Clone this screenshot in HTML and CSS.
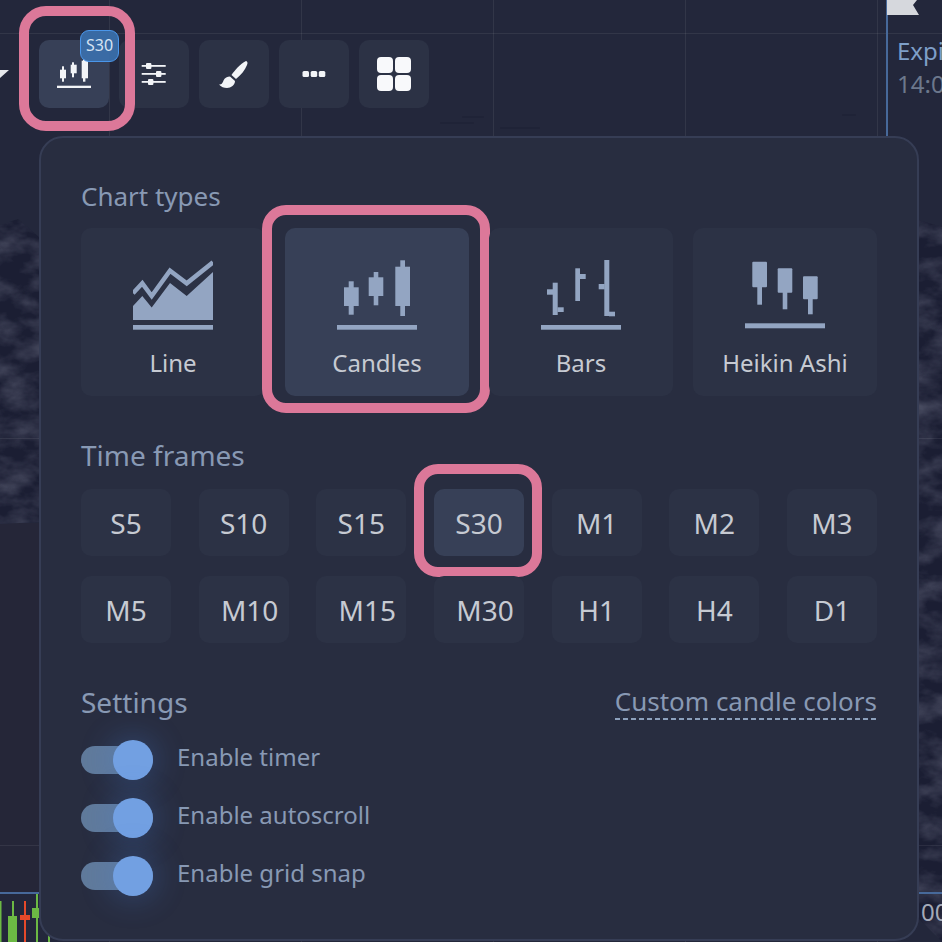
FILE: index.html
```html
<!DOCTYPE html>
<html lang="en">
<head>
    <meta charset="UTF-8">
    <meta name="viewport" content="width=device-width, initial-scale=1.0">
    <title>Chart settings</title>
    <link rel="stylesheet" href="styles.css">
</head>
<body>
    <!-- chart behind the panel -->
    <div class="chart">
        <svg class="chart-art" width="942" height="942" viewBox="0 0 942 942">
            <defs>
                <filter id="grain" x="0" y="0" width="100%" height="100%">
                    <feTurbulence type="fractalNoise" baseFrequency="0.03 0.05" numOctaves="4" seed="7"/>
                    <feColorMatrix type="matrix" values="0 0 0 0 0.145  0 0 0 0 0.155  0 0 0 0 0.225  1 0 0 0 -0.36" result="noise"/>
                    <feComposite in="noise" in2="SourceGraphic" operator="in"/>
                </filter>
            </defs>
            <rect width="942" height="942" fill="#23273b"/>
            <rect y="523" width="40" height="370" fill="#252638"/>
            <path d="M0 225 L18 219 L40 238 L300 200 L600 180 L900 215 L942 227 L942 942 L700 700 L40 522 L0 524 Z" fill="#1b1e33"/>
            <path d="M0 225 L18 219 L40 238 L300 200 L600 180 L900 215 L942 227 L942 942 L700 700 L40 522 L0 524 Z" filter="url(#grain)"/>
            <g class="specks">
                <rect x="440" y="122" width="34" height="2" rx="1"/>
                <rect x="462" y="116" width="22" height="2" rx="1"/>
                <rect x="500" y="127" width="40" height="2" rx="1"/>
                <rect x="842" y="114" width="14" height="2" rx="1"/>
            </g>
            <g class="grid-lines">
                <rect x="109" width="1" height="942"/>
                <rect x="301" width="1" height="942"/>
                <rect x="493" width="1" height="942"/>
                <rect x="685" width="1" height="942"/>
                <rect x="877" width="1" height="942"/>
                <rect y="33" width="942" height="1"/>
                <rect y="438" width="942" height="1"/>
                <rect y="845" width="942" height="1"/>
            </g>
            <rect y="892" width="942" height="2" fill="#47699a"/>
            <rect x="886" width="2" height="140" fill="#47699a"/>
            <polygon points="887,0 917,0 913,5 919,15 887,15" fill="#d6d8dd"/>
            <g fill="#6cb944">
                <rect x="0" y="901" width="1.5" height="41"/>
                <rect x="12" y="901" width="2" height="15"/>
                <rect x="8" y="916" width="9" height="26"/>
                <rect x="36" y="894" width="2" height="48"/>
                <rect x="32" y="908" width="8" height="10"/>
                <rect x="48" y="930" width="2" height="12"/>
            </g>
            <g fill="#e5492a">
                <rect x="24" y="901" width="2" height="41"/>
                <rect x="20" y="915" width="10" height="5"/>
            </g>
        </svg>
        <div class="expiry">
            <span class="expiry-label">Expiration</span>
            <span class="expiry-time">14:00:00</span>
        </div>
        <span class="axis-time">00:00</span>
    </div>

    <div class="toolbar">
        <svg class="caret" width="9" height="9" viewBox="0 0 9 9"><polygon points="0,0 9,0 0,8" fill="#e6e8ec"/></svg>
        <button class="tool-button active">
            <svg width="34" height="30" viewBox="0 0 34 30" fill="#f2f4f7">
                <rect x="5" y="7.3" width="2" height="15.4"/><rect x="3" y="10.7" width="6" height="8.6"/>
                <rect x="15" y="3.3" width="2" height="15"/><rect x="13.7" y="5.7" width="6" height="8.6" />
                <rect x="26" y="0" width="2.4" height="22.7"/><rect x="24.7" y="1.7" width="6.3" height="17.6"/>
                <rect y="26.7" width="34" height="2.3"/>
            </svg>
            <span class="badge">S30</span>
            <span class="mark"></span>
        </button>
        <button class="tool-button">
            <svg width="26" height="24" viewBox="0 0 26 24" fill="#f2f4f7">
                <rect x="0.7" y="3" width="24" height="1.8"/><rect x="0.7" y="11" width="24" height="1.8"/><rect x="0.7" y="19" width="24" height="1.8"/>
                <rect x="5" y="1" width="5.4" height="6" rx="1"/><rect x="15" y="9" width="5.4" height="6" rx="1"/><rect x="7" y="17" width="5.4" height="6" rx="1"/>
            </svg>
        </button>
        <button class="tool-button">
            <svg width="30" height="28" viewBox="0 0 30 28" fill="#f2f4f7">
                <path d="M27 1 C28.5 1.5 29 3 28 5 C26 10 22 15 17 19 L12.5 15 C16 10 21 4 27 1 Z"/>
                <path d="M11 16.5 L16 21 C16 25 12 28 8 28 C5 28 2 27 0 24.5 C3 24.5 3.5 23 4.5 20.5 C5.5 18 8.5 16.5 11 16.5 Z"/>
            </svg>
        </button>
        <button class="tool-button">
            <svg width="24" height="6" viewBox="0 0 24 6" fill="#f2f4f7">
                <rect x="0.5" width="6.5" height="6" rx="1.5"/><rect x="8.7" width="6.5" height="6" rx="1.5"/><rect x="16.8" width="6.5" height="6" rx="1.5"/>
            </svg>
        </button>
        <button class="tool-button">
            <svg width="34" height="34" viewBox="0 0 34 34" fill="#f8f9fb">
                <rect width="16" height="16" rx="4"/><rect x="18" width="16" height="16" rx="4"/>
                <rect y="18" width="16" height="16" rx="4"/><rect x="18" y="18" width="16" height="16" rx="4"/>
            </svg>
        </button>
    </div>

    <div class="panel">
        <div class="section-title small-title">Chart types</div>
        <div class="chart-types">
            <button class="type-card">
                <svg width="80" height="70" viewBox="0 0 80 70" fill="#93a5c2">
                    <polyline points="0,33.3 9.3,23.3 18.7,36 37,10.7 53.7,23.3 80,2.3" fill="none" stroke="#93a5c2" stroke-width="4.5"/>
                    <polygon points="0,46 9.3,36 18.7,47.5 37,23 53.7,36 80,12 80,60 0,60"/>
                    <rect y="65" width="80" height="4.7"/>
                </svg>
                <span>Line</span>
            </button>
            <button class="type-card active">
                <svg width="80" height="70" viewBox="0 0 80 70" fill="#93a5c2">
                    <rect x="11.7" y="21.3" width="5" height="33.4"/><rect x="7" y="27.3" width="14.7" height="18.7"/>
                    <rect x="36.7" y="12" width="4.6" height="33.3"/><rect x="31.7" y="17.3" width="14.6" height="18.7"/>
                    <rect x="63.3" y="0.3" width="4.7" height="55.7"/><rect x="58.3" y="6.7" width="14.7" height="39.3"/>
                    <rect y="65" width="80" height="4.7"/>
                </svg>
                <span>Candles</span>
                <span class="mark"></span>
            </button>
            <button class="type-card">
                <svg width="80" height="70" viewBox="0 0 80 70" fill="#93a5c2">
                    <rect x="11.7" y="22.7" width="5" height="32.3"/><rect x="6" y="29.3" width="6" height="5.4"/><rect x="16.5" y="47.3" width="6.2" height="4.7"/>
                    <rect x="34.3" y="8.3" width="4.7" height="32.7"/><rect x="39" y="14" width="5.7" height="5"/>
                    <rect x="63.3" y="0" width="5" height="56"/><rect x="57.7" y="24" width="6" height="5.3"/><rect x="68" y="51.7" width="6" height="4.6"/>
                    <rect y="65" width="80" height="4.7"/>
                </svg>
                <span>Bars</span>
            </button>
            <button class="type-card">
                <svg width="80" height="70" viewBox="0 0 80 70" fill="#93a5c2">
                    <rect x="12.3" y="20" width="4.7" height="24.7"/><rect x="7.3" y="1.7" width="14.7" height="25.6" rx="1"/>
                    <rect x="37.7" y="25" width="4.6" height="24.3"/><rect x="32.7" y="8.3" width="14.6" height="24.4" rx="1"/>
                    <rect x="63" y="30" width="4.7" height="24.3"/><rect x="58" y="16.3" width="14.7" height="23" rx="1"/>
                    <rect y="63.3" width="80" height="5"/>
                </svg>
                <span>Heikin Ashi</span>
            </button>
        </div>

        <div class="section-title frames-title">Time frames</div>
        <div class="time-frames">
            <button class="frame-button">S5</button>
            <button class="frame-button">S10</button>
            <button class="frame-button">S15</button>
            <button class="frame-button active">S30<span class="mark"></span></button>
            <button class="frame-button">M1</button>
            <button class="frame-button">M2</button>
            <button class="frame-button">M3</button>
            <button class="frame-button">M5</button>
            <button class="frame-button shifted">M10</button>
            <button class="frame-button shifted">M15</button>
            <button class="frame-button shifted">M30</button>
            <button class="frame-button">H1</button>
            <button class="frame-button">H4</button>
            <button class="frame-button">D1</button>
        </div>

        <div class="settings-head">
            <div class="section-title">Settings</div>
            <a class="custom-link">Custom candle colors</a>
        </div>
        <div class="settings-list">
            <div class="toggle-row"><span class="toggle"><span class="knob"></span></span><span class="toggle-label">Enable timer</span></div>
            <div class="toggle-row"><span class="toggle"><span class="knob"></span></span><span class="toggle-label">Enable autoscroll</span></div>
            <div class="toggle-row"><span class="toggle"><span class="knob"></span></span><span class="toggle-label">Enable grid snap</span></div>
        </div>
    </div>
</body>
</html>
```

FILE: styles.css
```css
:root {
    --page-bg: #23273b;
    --panel-bg: #282d40;
    --panel-border: #363d55;
    --card-bg: #2c3245;
    --card-active: #374057;
    --pink: #dc7899;
    --muted: #8899b4;
    --label: #c6cad2;
}

* {
    box-sizing: border-box;
}

body, html {
    margin: 0;
    padding: 0;
    width: 942px;
    height: 942px;
    overflow: hidden;
    background-color: var(--page-bg);
    font-family: 'Noto Sans', sans-serif;
}

body {
    position: relative;
}

button {
    font-family: inherit;
    border: none;
    padding: 0;
    cursor: pointer;
}

.chart {
    position: absolute;
    top: 0;
    left: 0;
    width: 942px;
    height: 942px;
    overflow: hidden;
}

.chart-art {
    display: block;
}

.grid-lines {
    fill: rgba(255, 255, 255, 0.07);
}

.specks {
    fill: rgba(20, 22, 40, 0.22);
}

.expiry {
    position: absolute;
    top: 34px;
    left: 897px;
    display: flex;
    flex-direction: column;
    font-size: 24px;
    line-height: 33px;
    white-space: nowrap;
}

.expiry-label {
    color: #7e9fc8;
}

.expiry-time {
    color: #6c788c;
}

.axis-time {
    position: absolute;
    top: 895px;
    left: 921px;
    font-size: 24px;
    line-height: 33px;
    color: #a4aab8;
}

.toolbar {
    position: relative;
    display: flex;
    align-items: center;
    gap: 10px;
    height: 68px;
    margin-top: 40px;
}

.caret {
    margin-right: 20px;
}

.tool-button {
    position: relative;
    display: flex;
    align-items: center;
    justify-content: center;
    width: 70px;
    height: 68px;
    border-radius: 10px;
    background-color: var(--card-bg);
}

.tool-button.active {
    z-index: 1;
    background-color: var(--card-active);
}

.badge {
    position: absolute;
    top: -10px;
    right: -10px;
    width: 39px;
    height: 32px;
    border: 1.5px solid #4a96ea;
    border-radius: 9px;
    background-color: rgba(58, 110, 170, 0.95);
    color: #d5e3f3;
    font-size: 16px;
    line-height: 29px;
    text-align: center;
}

.mark {
    position: absolute;
    border: 10px solid var(--pink);
    pointer-events: none;
}

.tool-button .mark {
    top: -34px;
    right: -26px;
    bottom: -23px;
    left: -20px;
    border-radius: 27px;
}

.type-card .mark {
    top: -23px;
    right: -21px;
    bottom: -17px;
    left: -23px;
    border-radius: 24px;
}

.frame-button .mark {
    top: -25px;
    right: -18px;
    bottom: -21px;
    left: -20px;
    border-radius: 24px;
}

.panel {
    position: relative;
    width: 880px;
    height: 805px;
    margin: 28px 0 0 39px;
    padding: 42px 40px 0;
    border: 2px solid var(--panel-border);
    border-radius: 24px;
    background-color: var(--panel-bg);
}

.section-title {
    font-size: 28px;
    line-height: 33px;
    color: var(--muted);
}

.small-title {
    font-size: 26px;
}

.chart-types {
    display: grid;
    grid-template-columns: repeat(4, 184px);
    gap: 20px;
    margin-top: 15px;
}

.type-card {
    position: relative;
    display: flex;
    flex-direction: column;
    align-items: center;
    height: 168px;
    padding-top: 32px;
    border-radius: 10px;
    background-color: var(--card-bg);
    color: var(--label);
    font-size: 24px;
    line-height: 30px;
}

.type-card span:not(.mark) {
    margin-top: 18px;
}

.type-card.active {
    background-color: var(--card-active);
}

.frames-title {
    margin-top: 43px;
}

.time-frames {
    display: grid;
    grid-template-columns: repeat(7, 90px);
    justify-content: space-between;
    row-gap: 20px;
    margin-top: 17px;
}

.frame-button {
    position: relative;
    height: 67px;
    border-radius: 10px;
    background-color: var(--card-bg);
    color: var(--label);
    font-size: 28px;
}

.frame-button.shifted {
    padding-left: 12px;
}

.frame-button.active {
    background-color: var(--card-active);
}

.settings-head {
    display: flex;
    justify-content: space-between;
    align-items: flex-start;
    margin-top: 43px;
}

.custom-link {
    font-size: 26px;
    line-height: 33px;
    margin-top: -1px;
    padding-bottom: 2px;
    color: var(--muted);
    background-image: repeating-linear-gradient(90deg, #8ca0bc 0 5px, transparent 5px 8px);
    background-size: 100% 2px;
    background-repeat: no-repeat;
    background-position: bottom left;
}

.settings-list {
    display: flex;
    flex-direction: column;
    gap: 18px;
    margin-top: 20px;
}

.toggle-row {
    display: flex;
    align-items: center;
    gap: 24px;
    height: 40px;
    font-size: 24px;
    color: var(--muted);
}

.toggle-label {
    margin-bottom: 8px;
}

.toggle {
    position: relative;
    display: block;
    width: 72px;
    height: 28px;
    border-radius: 14px;
    background-color: #607a9b;
}

.knob {
    position: absolute;
    top: -6px;
    right: 0;
    width: 40px;
    height: 40px;
    border-radius: 50%;
    background-color: #72a0e2;
    box-shadow: 0 0 30px 4px rgba(72, 130, 220, 0.28);
}
```
